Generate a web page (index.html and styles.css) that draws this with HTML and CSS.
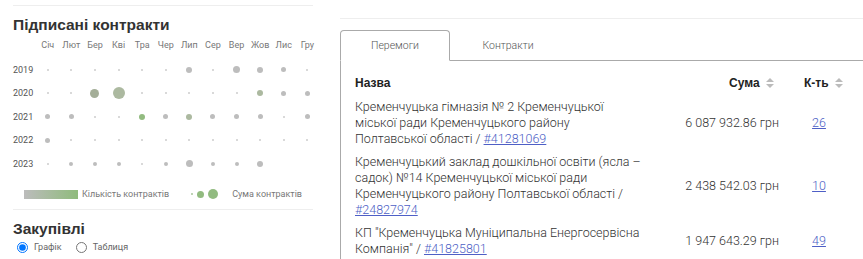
FILE: index.html
```html
<!DOCTYPE html>
<html lang="uk">
<head>
  <meta charset="UTF-8" />
  <meta name="viewport" content="width=device-width, initial-scale=1" />
  <title>Підписані контракти</title>
  <link rel="stylesheet" href="styles.css">
</head>
<body>
  <div class="page">
    <section class="side">
      <div class="block">
        <h2>Підписані контракти</h2>
        <div class="calendar">
          <span></span>
          <span class="month">Січ</span><span class="month">Лют</span><span class="month">Бер</span><span class="month">Кві</span>
          <span class="month">Тра</span><span class="month">Чер</span><span class="month">Лип</span><span class="month">Сер</span>
          <span class="month">Вер</span><span class="month">Жов</span><span class="month">Лис</span><span class="month">Гру</span>

          <span class="year">2019</span>
          <span class="cell"><i class="dot s0"></i></span><span class="cell"><i class="dot s0"></i></span><span class="cell"><i class="dot s0"></i></span><span class="cell"><i class="dot s0"></i></span>
          <span class="cell"><i class="dot s0"></i></span><span class="cell"><i class="dot s0"></i></span><span class="cell"><i class="dot s3"></i></span><span class="cell"><i class="dot s0"></i></span>
          <span class="cell"><i class="dot s4"></i></span><span class="cell"><i class="dot s3"></i></span><span class="cell"><i class="dot s2"></i></span><span class="cell"><i class="dot s0"></i></span>

          <span class="year">2020</span>
          <span class="cell"><i class="dot s0"></i></span><span class="cell"><i class="dot s0"></i></span><span class="cell"><i class="dot s5 olive"></i></span><span class="cell"><i class="dot s6 sage"></i></span>
          <span class="cell"><i class="dot s0"></i></span><span class="cell"><i class="dot s0"></i></span><span class="cell"><i class="dot s0"></i></span><span class="cell"><i class="dot s0"></i></span>
          <span class="cell"><i class="dot s0"></i></span><span class="cell"><i class="dot s3 sage"></i></span><span class="cell"><i class="dot s2"></i></span><span class="cell"><i class="dot s2"></i></span>

          <span class="year">2021</span>
          <span class="cell"><i class="dot s2"></i></span><span class="cell"><i class="dot s2"></i></span><span class="cell"><i class="dot s0"></i></span><span class="cell"><i class="dot s0"></i></span>
          <span class="cell"><i class="dot s3 green"></i></span><span class="cell"><i class="dot s2"></i></span><span class="cell"><i class="dot s3 sage"></i></span><span class="cell"><i class="dot s2"></i></span>
          <span class="cell"><i class="dot s2"></i></span><span class="cell"><i class="dot s2"></i></span><span class="cell"><i class="dot s0"></i></span><span class="cell"><i class="dot s2"></i></span>

          <span class="year">2022</span>
          <span class="cell"><i class="dot s2"></i></span><span class="cell"><i class="dot s0"></i></span><span class="cell"><i class="dot s0"></i></span><span class="cell"><i class="dot s0"></i></span>
          <span class="cell"><i class="dot s0"></i></span><span class="cell"><i class="dot s0"></i></span><span class="cell"><i class="dot s0"></i></span><span class="cell"><i class="dot s0"></i></span>
          <span class="cell"><i class="dot s0"></i></span><span class="cell"><i class="dot s0"></i></span><span class="cell"><i class="dot s0"></i></span><span class="cell"><i class="dot s0"></i></span>

          <span class="year">2023</span>
          <span class="cell"><i class="dot s0"></i></span><span class="cell"><i class="dot s1"></i></span><span class="cell"><i class="dot s1"></i></span><span class="cell"><i class="dot s1"></i></span>
          <span class="cell"><i class="dot s0"></i></span><span class="cell"><i class="dot s1"></i></span><span class="cell"><i class="dot s4"></i></span><span class="cell"><i class="dot s1"></i></span>
          <span class="cell"><i class="dot s1"></i></span><span class="cell"><i class="dot s3"></i></span><span class="cell"></span><span class="cell"></span>
        </div>
        <div class="legend">
          <span class="bar"></span>
          <span class="legend-text">Кількість контрактів</span>
          <span class="legend-dots"><i class="dot s0"></i><i class="dot s3 green"></i><i class="dot s5 green"></i></span>
          <span class="legend-text">Сума контрактів</span>
        </div>
      </div>
      <div class="block">
        <h2>Закупівлі</h2>
        <div class="switch">
          <label><input type="radio" name="view" checked> Графік</label>
          <label><input type="radio" name="view"> Таблиця</label>
        </div>
      </div>
    </section>

    <section class="main">
      <div class="tabs">
        <span class="tab active">Перемоги</span>
        <span class="tab">Контракти</span>
      </div>
      <div class="panel">
        <table>
          <thead>
            <tr>
              <th class="name">Назва</th>
              <th class="sum">Сума <span class="sort"></span></th>
              <th class="count">К-ть <span class="sort"></span></th>
            </tr>
          </thead>
          <tbody>
            <tr>
              <td class="name">Кременчуцька гімназія № 2 Кременчуцької міської ради Кременчуцького району Полтавської області / <a href="#">#41281069</a></td>
              <td class="sum">6 087 932.86 грн</td>
              <td class="count"><a href="#">26</a></td>
            </tr>
            <tr>
              <td class="name">Кременчуцький заклад дошкільної освіти (ясла – садок) №14 Кременчуцької міської ради Кременчуцького району Полтавської області / <a href="#">#24827974</a></td>
              <td class="sum">2 438 542.03 грн</td>
              <td class="count"><a href="#">10</a></td>
            </tr>
            <tr>
              <td class="name">КП "Кременчуцька Муніципальна Енергосервісна Компанія" / <a href="#">#41825801</a></td>
              <td class="sum">1 947 643.29 грн</td>
              <td class="count"><a href="#">49</a></td>
            </tr>
          </tbody>
        </table>
      </div>
    </section>
  </div>
</body>
</html>
```

FILE: styles.css
```css
* { box-sizing: border-box; }
body { margin: 0; font-family: Roboto, "Liberation Sans", sans-serif; color: #333; background: #fff; overflow: hidden; }
.page { display: flex; align-items: flex-start; padding-left: 13px; }

/* left column */
.side { width: 300px; flex: none; padding-top: 5px; }
.block { border-top: 1px solid #eee; }
.block h2 { margin: 0; padding-top: 9px; font-family: "Liberation Sans", Arial, sans-serif; font-size: 15.5px; font-weight: 700; color: #333; line-height: 20px; }

.calendar { display: grid; grid-template-columns: 23px repeat(12, 23.6px); grid-template-rows: 23px; grid-auto-rows: 23.5px; width: 310px; }
.month { font-size: 9px; line-height: 20px; color: #777; text-align: center; align-self: start; white-space: nowrap; }
.year { font-size: 9px; color: #555; align-self: center; }
.cell { display: flex; align-items: center; justify-content: center; }
.dot { display: inline-block; border-radius: 50%; background: #bdbdbd; flex: none; }
.s0 { width: 2px; height: 2px; background: #ccc; }
.s1 { width: 4px; height: 4px; }
.s2 { width: 5px; height: 5px; }
.s3 { width: 6px; height: 6px; }
.s4 { width: 7px; height: 7px; }
.s5 { width: 9px; height: 9px; }
.s6 { width: 12px; height: 12px; }
.olive { background: #a4ae98; }
.sage { background: #acb9a0; }
.green { background: #92bb80; }

.legend { display: flex; align-items: center; height: 11px; margin: 13px 0 9px; padding-left: 11px; }
.bar { width: 54px; height: 9px; background: linear-gradient(to right, #bcbcbc, #8fbb7c); }
.legend-text { font-size: 9px; color: #777; margin-left: 4px; }
.legend-dots { display: flex; align-items: center; gap: 4px; margin-left: 22px; margin-right: 10px; }
.legend-dots .s0 { background: #a9c69c; }
.legend-dots .s3 { width: 7px; height: 7px; }
.legend-dots .s5 { width: 10px; height: 10px; }

.switch { display: flex; gap: 10px; margin-top: 3px; }
.switch label { display: flex; align-items: center; height: 11px; font-size: 9px; color: #666; }
.switch input { width: 11px; height: 11px; margin: 0 6px 0 4px; }

/* right column */
.main { flex: 1; margin: 18px 0 0 27px; padding-top: 11px; border-top: 1px solid #eee; }
.tabs { display: flex; border-bottom: 1px solid #aaa; height: 31px; }
.tab { width: 110px; height: 31px; display: flex; align-items: center; justify-content: center; font-size: 10.5px; font-weight: 300; color: #555; }
.tab + .tab { width: 116px; }
.tab.active { border: 1px solid #aaa; border-bottom: 1px solid #fff; border-radius: 4px 4px 0 0; margin-bottom: -1px; }
.panel { border-left: 1px solid #aaa; padding: 8px 0 0 14px; }

table { border-collapse: collapse; table-layout: fixed; width: 504px; font-size: 12px; line-height: 16px; }
th { font-family: "Liberation Sans", Arial, sans-serif; font-weight: 700; color: #222; padding: 6px 0 4px; text-align: left; white-space: nowrap; }
td { padding: 3.5px 0; color: #333; font-size: 12.5px; font-weight: 300; }
.name { width: 304px; padding-right: 15px; }
.sum { width: 120px; text-align: right; white-space: nowrap; }
th.sum { padding-right: 5px; }
td.count { text-align: center; }
th.count { padding-left: 25px; }
a { color: #4e5fc6; }

.sort { display: inline-block; position: relative; width: 8px; height: 10px; margin-left: 3px; vertical-align: -1px; }
.sort::before, .sort::after { content: ""; position: absolute; left: 0; border-left: 4px solid transparent; border-right: 4px solid transparent; }
.sort::before { top: 0; border-bottom: 4px solid #bbb; }
.sort::after { bottom: 0; border-top: 4px solid #bbb; }
```
